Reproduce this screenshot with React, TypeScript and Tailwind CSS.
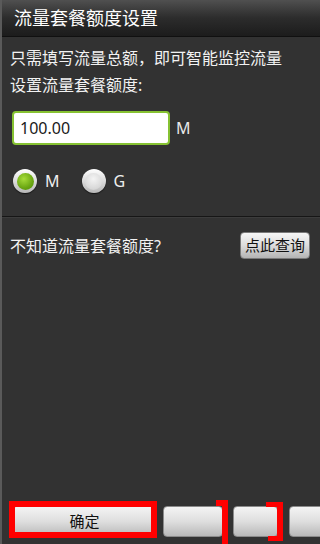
import React from "react";

function Radio({ checked }: { checked: boolean }) {
  return (
    <div className="w-[24px] h-[24px] rounded-full bg-gradient-to-b from-[#ffffff] to-[#b8b8b8] flex items-center justify-center shadow-[0_1px_1px_rgba(0,0,0,0.6)]">
      {checked ? (
        <div className="w-[17px] h-[17px] rounded-full bg-[radial-gradient(circle_at_40%_35%,#a6dc3a,#6aa612_60%,#4c8a08)]" />
      ) : (
        <div className="w-[17px] h-[17px] rounded-full bg-[radial-gradient(circle_at_50%_35%,#f4f4f4,#d8d8d8_70%,#c4c4c4)]" />
      )}
    </div>
  );
}

export default function App() {
  const font = { fontFamily: '"Noto Sans", "Noto Sans CJK SC", sans-serif' };
  const btn =
    "h-[31px] rounded-[4px] bg-gradient-to-b from-[#f4f4f4] via-[#dedede] to-[#b9b9b9] border border-[#8a8a8a] flex items-center justify-center text-[15px] text-[#111] shrink-0";
  return (
    <div
      className="relative w-[320px] h-[544px] bg-[#323232] flex flex-col overflow-hidden border-l-2 border-[#5a5a5a]"
      style={font}
    >
      <div className="h-[37px] shrink-0 bg-gradient-to-b from-[#505050] via-[#2c2c2c] to-[#1c1c1c] border-b border-[#101010] flex items-center pl-[12px] text-[18px] text-white leading-none">
        流量套餐额度设置
      </div>

      <div className="flex flex-col pl-[8px] pr-[10px]">
        <div className="mt-[11px] text-[16px] leading-[20px] text-[#f2f2f2]">
          只需填写流量总额，即可智能监控流量
        </div>
        <div className="mt-[7px] text-[16px] leading-[20px] text-[#f2f2f2]">
          设置流量套餐额度:
        </div>
        <div className="mt-[16px] flex items-center">
          <div className="ml-[2px] w-[158px] h-[34px] rounded-[4px] border-2 border-[#86c232] bg-white flex items-center pl-[6px] text-[16px] text-[#1a1a1a]">
            100.00
          </div>
          <span className="ml-[6px] text-[16px] text-[#e8e8e8]">M</span>
        </div>
        <div className="mt-[24px] flex items-center h-[24px]">
          <div className="ml-[3px]">
            <Radio checked />
          </div>
          <span className="ml-[8px] text-[16px] text-[#eeeeee]">M</span>
          <div className="ml-[22px]">
            <Radio checked={false} />
          </div>
          <span className="ml-[8px] text-[16px] text-[#eeeeee]">G</span>
        </div>
      </div>

      <div className="mt-[23px] h-[1px] bg-[#161616] border-b border-[#3c3c3c] box-content" />

      <div className="mt-[14px] flex items-center justify-between pl-[8px] pr-[10px]">
        <span className="text-[16px] text-[#f2f2f2]">不知道流量套餐额度?</span>
        <div className="w-[70px] h-[27px] rounded-[4px] bg-gradient-to-b from-[#f6f6f6] via-[#dcdcdc] to-[#b4b4b4] border border-[#7a7a7a] flex items-center justify-center text-[15px] text-[#111]">
          点此查询
        </div>
      </div>

      <div className="flex-1" />

      <div className="flex items-end pb-[7px] pl-[10px]">
        <div className={btn + " w-[145px]"}>确定</div>
        <div className={btn + " w-[60px] ml-[6px]"} />
        <div className={btn + " w-[45px] ml-[10px]"} />
        <div className={btn + " w-[50px] ml-[11px]"} />
      </div>

      {/* red annotation marks */}
      <div className="absolute left-[7px] top-[501px] w-[148px] h-[37px] border-[6px] border-[#ff0000]" />
      <div className="absolute left-[214px] top-[500px] w-[11px] h-[6px] bg-[#ff0000]" />
      <div className="absolute left-[220px] top-[500px] w-[6px] h-[44px] bg-[#ff0000]" />
      <div className="absolute left-[264px] top-[502px] w-[17px] h-[5px] bg-[#ff0000]" />
      <div className="absolute left-[275px] top-[502px] w-[6px] h-[39px] bg-[#ff0000]" />
      <div className="absolute left-[266px] top-[536px] w-[15px] h-[5px] bg-[#ff0000]" />
    </div>
  );
}
